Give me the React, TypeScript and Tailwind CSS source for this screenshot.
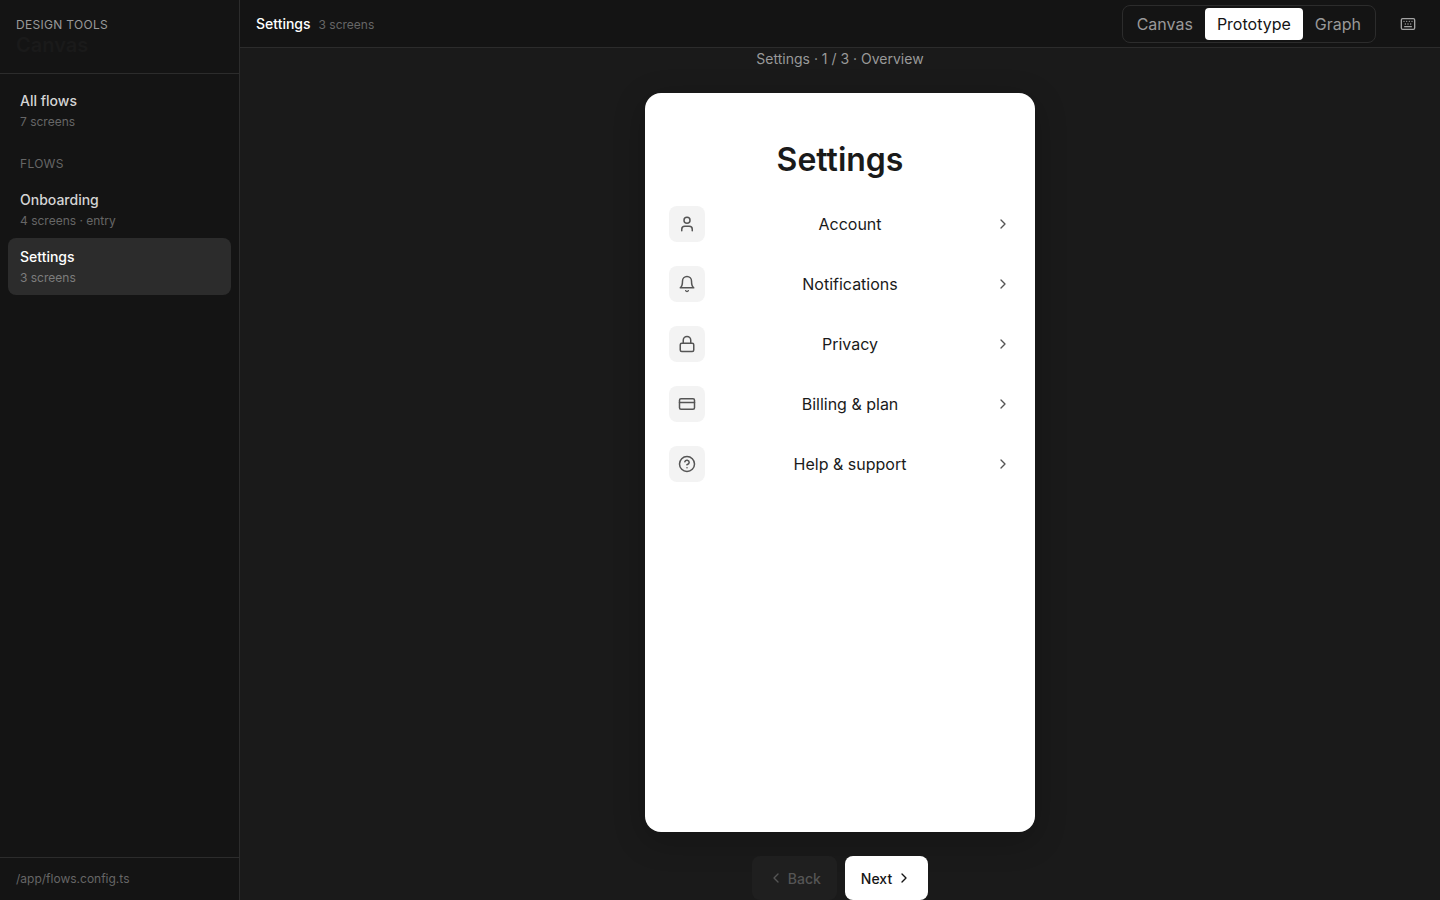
import { useState } from "react";
import type { ReactNode } from "react";
import {
  ChevronLeft,
  ChevronRight,
  CircleQuestionMark,
  CreditCard,
  Keyboard,
  Lock,
  User,
} from "lucide-react";

type Flow = { name: string; detail: string };

const flows: Flow[] = [
  { name: "Onboarding", detail: "4 screens · entry" },
  { name: "Settings", detail: "3 screens" },
];

const modes = ["Canvas", "Prototype", "Graph"];

function Bell() {
  return (
    <svg
      width="18"
      height="18"
      viewBox="0 0 24 24"
      fill="none"
      stroke="currentColor"
      strokeWidth="2"
      strokeLinecap="round"
      strokeLinejoin="round"
      aria-hidden="true"
    >
      <path d="M6 8a6 6 0 0 1 12 0c0 7 3 9 3 9H3s3-2 3-9" />
      <path d="M10.3 21a1.94 1.94 0 0 0 3.4 0" />
    </svg>
  );
}

const rows: { label: string; icon: ReactNode }[] = [
  { label: "Account", icon: <User size={18} /> },
  { label: "Notifications", icon: <Bell /> },
  { label: "Privacy", icon: <Lock size={18} /> },
  { label: "Billing & plan", icon: <CreditCard size={18} /> },
  { label: "Help & support", icon: <CircleQuestionMark size={18} /> },
];

function FlowItem({
  flow,
  active,
  onSelect,
}: {
  flow: Flow;
  active: boolean;
  onSelect: () => void;
}) {
  return (
    <button
      type="button"
      onClick={onSelect}
      className={
        active
          ? "flex w-full flex-col gap-0.5 rounded-lg bg-[#2c2c2c] px-3 py-2 text-left text-white"
          : "flex w-full flex-col gap-0.5 rounded-lg px-3 py-2 text-left text-[#d4d4d4]"
      }
    >
      <span className="text-sm leading-[21px] font-medium">{flow.name}</span>
      <span className={active ? "text-xs leading-[18px] text-[#7c7c7c]" : "text-xs leading-[18px] text-[#666666]"}>
        {flow.detail}
      </span>
    </button>
  );
}

export default function App() {
  const [selected, setSelected] = useState("Settings");
  const [mode, setMode] = useState("Prototype");

  return (
    <div className="flex h-screen bg-[#1a1a1a] font-['Inter',sans-serif]">
      <aside className="flex w-60 shrink-0 flex-col border-r border-[#2c2c2c] bg-[#141414]">
        <div className="border-b border-[#2c2c2c] p-4">
          <p className="text-xs leading-[18px] tracking-wide text-[#999999] uppercase">Design tools</p>
          <h1 className="text-xl leading-[23px] font-semibold text-[#1a1a1a]">Canvas</h1>
        </div>
        <nav className="flex-1 p-2">
          <FlowItem
            flow={{ name: "All flows", detail: "7 screens" }}
            active={selected === "All flows"}
            onSelect={() => setSelected("All flows")}
          />
          <h2 className="mt-4 mb-2 px-3 text-xs leading-[18px] tracking-wide text-[#666666] uppercase">
            Flows
          </h2>
          {flows.map((flow) => (
            <FlowItem
              key={flow.name}
              flow={flow}
              active={selected === flow.name}
              onSelect={() => setSelected(flow.name)}
            />
          ))}
        </nav>
        <div className="border-t border-[#2c2c2c] px-4 py-3 text-xs leading-[18px] text-[#666666]">
          /app/flows.config.ts
        </div>
      </aside>

      <div className="flex min-w-0 flex-1 flex-col">
        <header className="flex h-12 shrink-0 items-center justify-between border-b border-[#2c2c2c] bg-[#141414] px-4">
          <div className="flex items-baseline gap-2">
            <span className="text-sm leading-[21px] font-medium text-white">Settings</span>
            <span className="text-xs leading-[18px] text-[#666666]">3 screens</span>
          </div>
          <div className="flex items-center gap-4">
            <div className="flex rounded-lg border border-[#2c2c2c] p-0.5">
              {modes.map((name) => (
                <button
                  key={name}
                  type="button"
                  aria-pressed={mode === name}
                  onClick={() => setMode(name)}
                  className={
                    mode === name
                      ? "rounded bg-white px-3 py-1 text-base text-[#141414]"
                      : "rounded px-3 py-1 text-base text-[#999999]"
                  }
                >
                  {name}
                </button>
              ))}
            </div>
            <button
              type="button"
              aria-label="Keyboard shortcuts"
              className="flex size-8 items-center justify-center text-[#a3a3a3]"
            >
              <Keyboard size={16} />
            </button>
          </div>
        </header>

        <main className="flex min-h-0 flex-1 flex-col items-center gap-6">
          <p className="text-sm leading-[21px] text-[#999999]">Settings · 1 / 3 · Overview</p>
          <section className="flex min-h-0 w-full max-w-[390px] flex-1 flex-col rounded-2xl bg-white px-6 pt-11 text-[#1a1a1a] shadow-[0_8px_32px_rgba(0,0,0,0.24)]">
            <h2 className="mb-3 text-center text-[32px] leading-[45px] font-semibold">Settings</h2>
            <ul>
              {rows.map((row) => (
                <li key={row.label}>
                  <button type="button" className="flex w-full items-center gap-3 py-3">
                    <span className="flex size-9 items-center justify-center rounded-lg bg-[#f3f3f3] text-[#555555]">
                      {row.icon}
                    </span>
                    <span className="flex-1 text-base">{row.label}</span>
                    <ChevronRight size={16} className="text-[#555555]" />
                  </button>
                </li>
              ))}
            </ul>
          </section>
          <div className="flex gap-2">
            <button
              type="button"
              disabled
              className="flex h-11 items-center gap-1 rounded-lg bg-[#1f1f1f] px-4 text-sm leading-[21px] font-medium text-[#555555]"
            >
              <ChevronLeft size={16} />
              Back
            </button>
            <button
              type="button"
              className="flex h-11 items-center gap-1 rounded-lg bg-white px-4 text-sm leading-[21px] font-medium text-[#141414]"
            >
              Next
              <ChevronRight size={16} />
            </button>
          </div>
        </main>
      </div>
    </div>
  );
}
